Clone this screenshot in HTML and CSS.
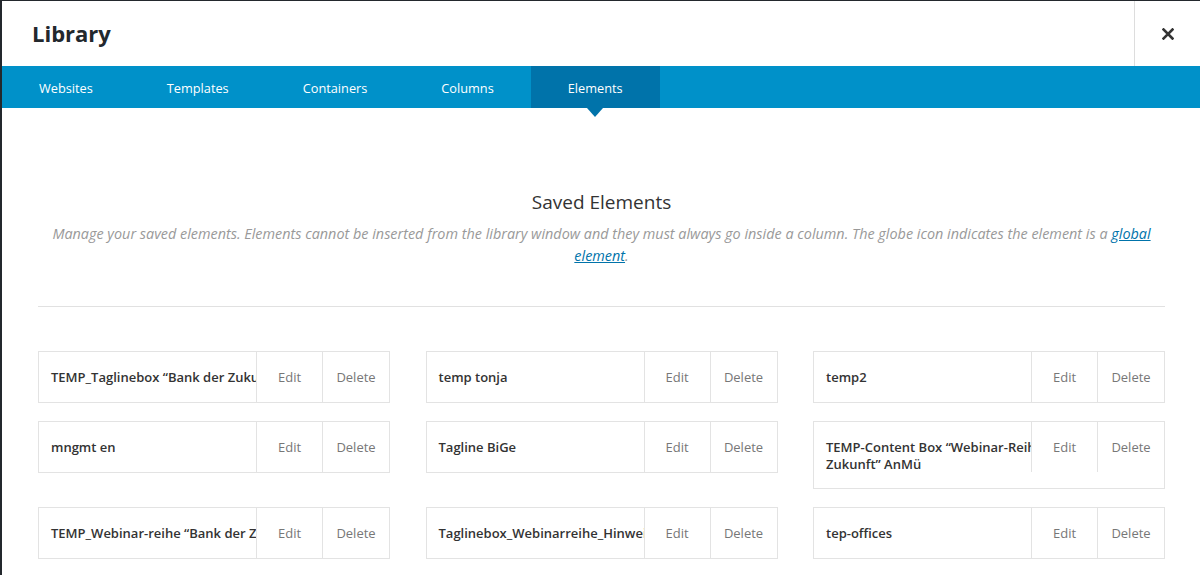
FILE: index.html
```html
<!DOCTYPE html>
<html lang="en">
<head>
<meta charset="utf-8">
<title>Library</title>
<link rel="stylesheet" href="styles.css">
</head>
<body>
<div class="modal">
  <header class="modal-header">
    <h1 class="modal-title">Library</h1>
    <button class="close-btn" aria-label="Close">
      <svg width="12" height="12" viewBox="0 0 12 12"><path d="M1.5 1.5 L10.5 10.5 M10.5 1.5 L1.5 10.5" stroke="#333" stroke-width="2.6" stroke-linecap="square" fill="none"/></svg>
    </button>
  </header>
  <nav class="tabs">
    <a class="tab">Websites</a>
    <a class="tab">Templates</a>
    <a class="tab">Containers</a>
    <a class="tab">Columns</a>
    <a class="tab active">Elements</a>
  </nav>
  <main class="content">
    <h2 class="section-title">Saved Elements</h2>
    <p class="section-desc">Manage your saved elements. Elements cannot be inserted from the library window and they must always go inside a column. The globe icon indicates the element is a <a href="#" class="link">global element</a>.</p>
    <hr class="divider">
    <ul class="items">
      <li class="item"><span class="item-name">TEMP_Taglinebox “Bank der Zukunft”</span><span class="actions"><span class="action">Edit</span><span class="action">Delete</span></span></li>
      <li class="item"><span class="item-name">temp tonja</span><span class="actions"><span class="action">Edit</span><span class="action">Delete</span></span></li>
      <li class="item"><span class="item-name">temp2</span><span class="actions"><span class="action">Edit</span><span class="action">Delete</span></span></li>
      <li class="item"><span class="item-name">mngmt en</span><span class="actions"><span class="action">Edit</span><span class="action">Delete</span></span></li>
      <li class="item"><span class="item-name">Tagline BiGe</span><span class="actions"><span class="action">Edit</span><span class="action">Delete</span></span></li>
      <li class="item"><span class="item-name">TEMP-Content Box “Webinar-Reihe Bank der Zukunft” AnMü</span><span class="actions"><span class="action">Edit</span><span class="action">Delete</span></span></li>
      <li class="item"><span class="item-name">TEMP_Webinar-reihe “Bank der Zukunft”</span><span class="actions"><span class="action">Edit</span><span class="action">Delete</span></span></li>
      <li class="item"><span class="item-name">Taglinebox_Webinarreihe_Hinweis</span><span class="actions"><span class="action">Edit</span><span class="action">Delete</span></span></li>
      <li class="item"><span class="item-name">tep-offices</span><span class="actions"><span class="action">Edit</span><span class="action">Delete</span></span></li>
    </ul>
  </main>
</div>
</body>
</html>
```

FILE: styles.css
```css
* { box-sizing: border-box; }
html, body {
  margin: 0;
  padding: 0;
  height: 100%;
  overflow: hidden;
}
body {
  background: #23282d;
  font-family: "Open Sans", "Noto Sans", sans-serif;
  color: #333;
  padding: 1px 0 0 2px;
}
.modal {
  background: #fff;
  min-height: 100%;
  width: 1198px;
}
.modal-header {
  height: 65px;
  display: flex;
  align-items: center;
  justify-content: space-between;
}
.modal-title {
  margin: 0 0 0 30px;
  font-size: 22px;
  font-weight: 700;
  color: #23282d;
  line-height: 1;
  padding-bottom: 2px;
}
.close-btn {
  width: 66px;
  height: 65px;
  border: 0;
  border-left: 1px solid #ddd;
  background: #fff;
  display: flex;
  align-items: center;
  justify-content: center;
  padding: 0 0 0 1px;
  cursor: pointer;
}
.tabs {
  display: flex;
  height: 42px;
  background: #0091c9;
}
.tab {
  position: relative;
  display: flex;
  align-items: center;
  padding: 2px 37px 0;
  font-size: 12.75px;
  color: #fff;
  text-decoration: none;
}
.tab.active {
  background: #0073aa;
}
.tab.active::after {
  content: "";
  position: absolute;
  left: 50%;
  top: 100%;
  margin-left: -8px;
  border-left: 8px solid transparent;
  border-right: 8px solid transparent;
  border-top: 9px solid #0073aa;
}
.content {
  padding: 82px 35px 0 36px;
}
.section-title {
  margin: 0;
  text-align: center;
  font-size: 19px;
  font-weight: 400;
  line-height: 24px;
  color: #333;
}
.section-desc {
  margin: 9px 0 0;
  text-align: center;
  font-size: 14.4px;
  line-height: 22px;
  font-style: italic;
  color: #999;
}
.link {
  color: #0073aa;
  text-decoration: underline;
}
.divider {
  margin: 39px 0 0;
  border: 0;
  border-top: 1px solid #e1e1e1;
  height: 0;
}
.items {
  list-style: none;
  margin: 44px 0 0;
  padding: 0;
  display: grid;
  grid-template-columns: repeat(3, 1fr);
  column-gap: 35.5px;
  row-gap: 18px;
  align-items: start;
}
.item {
  position: relative;
  border: 1px solid #e3e3e3;
  padding: 17px 12px 15px;
  font-size: 13px;
  line-height: 17px;
  min-height: 52px;
}
.item-name {
  font-weight: 600;
  color: #333;
}
.actions {
  position: absolute;
  top: 0;
  right: 0;
  height: 50px;
  display: flex;
  background: #fff;
}
.action {
  width: 66px;
  border-left: 1px solid #e3e3e3;
  display: flex;
  align-items: center;
  justify-content: center;
  color: #777;
  font-weight: 400;
}
.action + .action {
  width: 67px;
}
```
